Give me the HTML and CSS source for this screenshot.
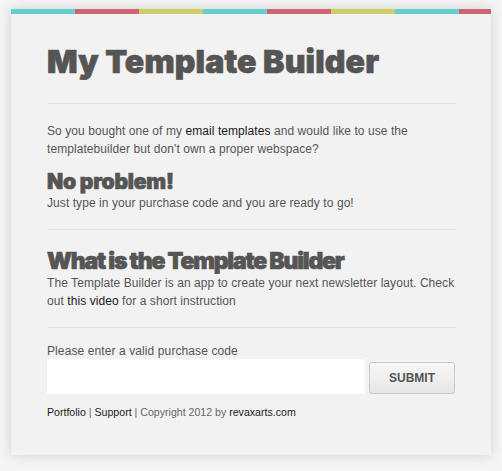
FILE: index.html
```html
<!DOCTYPE html>
<html>
<head>
<meta charset="utf-8">
<title>My Template Builder</title>
<link rel="stylesheet" href="styles.css">
</head>
<body>
<div class="card">
  <div class="stripe"></div>
  <div class="content">
    <h1 class="title">My Template Builder</h1>
    <hr class="rule">
    <p class="text intro">So you bought one of my <a href="#">email templates</a> and would like to use the templatebuilder but don't own a proper webspace?</p>
    <h2 class="heading small">No problem!</h2>
    <p class="text">Just type in your purchase code and you are ready to go!</p>
    <hr class="rule r2">
    <h2 class="heading big">What is the Template Builder</h2>
    <p class="text">The Template Builder is an app to create your next newsletter layout. Check out <a href="#">this video</a> for a short instruction</p>
    <hr class="rule r3">
    <form class="form">
      <label class="label" for="code">Please enter a valid purchase code</label>
      <div class="row">
        <input class="input" id="code" type="text">
        <button class="button" type="button">SUBMIT</button>
      </div>
    </form>
    <p class="footer"><a href="#">Portfolio</a> | <a href="#">Support</a> | Copyright 2012 by <a href="#">revaxarts.com</a></p>
  </div>
</div>
</body>
</html>
```
FILE: styles.css
```css
html, body { margin: 0; padding: 0; }
body {
  background: #f5f5f5;
  font-family: "Liberation Sans", Arial, sans-serif;
  color: #555;
  padding: 9px 11px 16px;
}
.card {
  width: 480px;
  background: #f2f2f2;
  box-shadow: 0 0 12px rgba(0,0,0,0.16);
}
.stripe {
  height: 5px;
  background: repeating-linear-gradient(90deg, #63cfd0 0 64px, #cd6574 64px 128px, #cfcd68 128px 192px);
}
.content { padding: 30px 34px 36px 36px; }
.title, .heading {
  font-family: Inter, "Liberation Sans", sans-serif;
  font-weight: 900;
  color: #555;
  margin: 0;
  -webkit-text-stroke: 0.7px #555;
}
.title {
  font-size: 32px;
  line-height: 36px;
  letter-spacing: 0.15px;
}
.rule {
  border: 0;
  border-top: 1px solid #e3e3e3;
  margin: 23px 1px 0 0;
  height: 0;
}
.r2, .r3 { margin-top: 17px; }
.text {
  font-size: 12px;
  line-height: 18px;
  letter-spacing: 0.07px;
  margin: 0;
}
.intro { margin-top: 18px; }
.text a, .footer a { color: #1a1a1a; text-decoration: none; }
.heading.small {
  font-size: 21px;
  line-height: 24px;
  letter-spacing: -0.2px;
  margin-top: 12px;
}
.heading.big {
  font-size: 23px;
  line-height: 26px;
  letter-spacing: -1.2px;
  margin-top: 18px;
}
.form { margin: 16px 0 0; }
.label {
  display: block;
  font-size: 12px;
  line-height: 15px;
  letter-spacing: 0.1px;
}
.row { display: flex; align-items: flex-end; gap: 4px; }
.input {
  width: 318px;
  height: 35px;
  box-sizing: border-box;
  border: 0;
  background: #fff;
  margin: 0;
  padding: 0 8px;
  font: 12px "Liberation Sans", Arial, sans-serif;
}
.button {
  width: 86px;
  height: 32px;
  box-sizing: border-box;
  border: 1px solid #c9c9c9;
  border-radius: 3px;
  background: linear-gradient(#f8f8f8, #e6e6e6);
  color: #555;
  font: bold 12px "Liberation Sans", Arial, sans-serif;
  margin: 0;
  padding: 0;
}
.footer {
  font-size: 10.6px;
  line-height: 14px;
  margin: 11px 0 0;
  color: #666;
}
```
